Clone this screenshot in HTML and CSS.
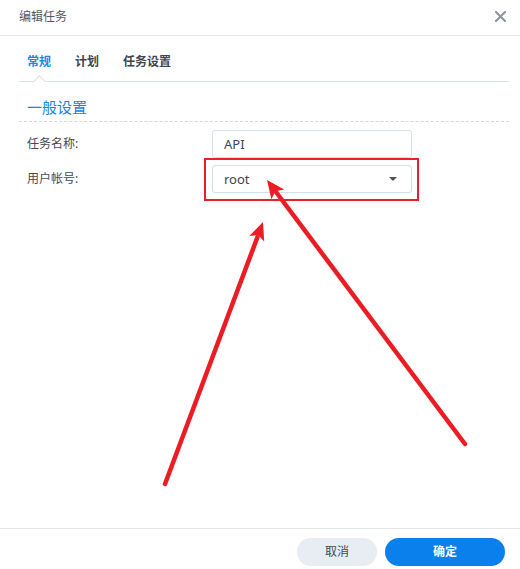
FILE: index.html
```html
<!DOCTYPE html>
<html lang="zh">
<head>
<meta charset="utf-8">
<title>编辑任务</title>
<link rel="stylesheet" href="styles.css">
</head>
<body>
<div class="dialog">
  <div class="header">
    <span class="title">编辑任务</span>
    <span class="close" aria-label="关闭">
      <svg width="11" height="11" viewBox="0 0 11 11"><path d="M1 1L10 10M10 1L1 10" stroke="#8e959c" stroke-width="2.2" stroke-linecap="square"/></svg>
    </span>
  </div>
  <div class="body">
    <div class="tabs">
      <span class="tab active">常规</span>
      <span class="tab">计划</span>
      <span class="tab">任务设置</span>
    </div>
    <div class="section-title">一般设置</div>
    <div class="form">
      <div class="row">
        <label class="label">任务名称:</label>
        <div class="input">API</div>
      </div>
      <div class="row">
        <label class="label">用户帐号:</label>
        <div class="input select highlighted">
          <span>root</span>
          <span class="caret"></span>
        </div>
      </div>
    </div>
  </div>
  <div class="footer">
    <button class="btn cancel">取消</button>
    <button class="btn ok">确定</button>
  </div>
  <svg class="annotations" width="520" height="569" viewBox="0 0 520 569">
    <g stroke="#ec1c24" stroke-width="4.5" stroke-linecap="round" fill="none">
      <line x1="165" y1="484" x2="257.5" y2="237"/>
      <line x1="465" y1="444" x2="276" y2="192"/>
    </g>
    <g fill="#ec1c24">
      <polygon points="263,222 264.2,241.6 258.1,235.1 249.2,236.1"/>
      <polygon points="267,180 284.2,189.6 275.4,191.2 271.4,199.2"/>
    </g>
  </svg>
</div>
</body>
</html>
```
FILE: styles.css
```css
* { box-sizing: border-box; }
html, body { margin: 0; padding: 0; background: #fff; }
body {
  font-family: "Noto Sans", "Noto Sans CJK SC", sans-serif;
  color: #414b55;
}
.dialog {
  position: relative;
  width: 520px;
  height: 569px;
  display: flex;
  flex-direction: column;
  background: #fff;
}
.header {
  height: 36px;
  border-bottom: 1px solid #e3e7eb;
  display: flex;
  align-items: center;
  justify-content: space-between;
  padding: 0 14px 2px 19px;
}
.title {
  font-size: 12px;
  color: #505a64;
  line-height: 16px;
}
.close {
  display: flex;
  width: 12px;
  height: 12px;
  align-items: center;
  justify-content: center;
}
.body {
  flex: 1;
  padding: 0 11px 0 19px;
}
.tabs {
  display: flex;
  gap: 8px;
  padding: 16px 0 9px;
  border-bottom: 1px solid #d8e0e7;
}
.tab {
  position: relative;
  padding: 0 8px;
  font-size: 12px;
  font-weight: 700;
  line-height: 20px;
  color: #3d4650;
}
.tab.active { color: #1a88e6; }
.tab.active::after {
  content: "";
  position: absolute;
  left: 50%;
  bottom: -14px;
  width: 8px;
  height: 8px;
  margin-left: -4px;
  background: #fff;
  border-top: 1px solid #d8e0e7;
  border-left: 1px solid #d8e0e7;
  transform: rotate(45deg);
}
.section-title {
  margin-top: 14px;
  padding: 0 8px 3px;
  font-size: 15px;
  line-height: 22px;
  color: #1685e6;
  border-bottom: 1px dashed #d3d9df;
}
.form {
  display: flex;
  flex-direction: column;
  gap: 7px;
  padding: 8px 0 0 8px;
}
.row {
  display: flex;
  align-items: center;
}
.label {
  width: 185px;
  font-size: 12px;
  color: #414b55;
  line-height: 16px;
}
.input {
  position: relative;
  width: 200px;
  height: 28px;
  border: 1px solid #d6dee6;
  border-radius: 3px;
  padding: 0 11px;
  font-size: 13px;
  line-height: 26px;
  color: #3c4650;
  display: flex;
  align-items: center;
  justify-content: space-between;
}
.caret {
  width: 0;
  height: 0;
  border-left: 4px solid transparent;
  border-right: 4px solid transparent;
  border-top: 4px solid #4a5560;
  margin-right: 3px;
}
.highlighted::after {
  content: "";
  position: absolute;
  left: -9px;
  right: -8px;
  top: -8px;
  bottom: -9px;
  border: 2px solid #e8202a;
}
.footer {
  height: 41px;
  border-top: 1px solid #e1e6ea;
  display: flex;
  justify-content: flex-end;
  align-items: flex-start;
  gap: 8px;
  padding: 9px 15px 0 0;
}
.btn {
  height: 28px;
  border: none;
  border-radius: 14px;
  font-family: "Noto Sans", "Noto Sans CJK SC", sans-serif;
  font-size: 12px;
  line-height: 28px;
  padding: 0;
  cursor: pointer;
}
.cancel {
  width: 80px;
  background: #e8edf3;
  color: #414b55;
}
.ok {
  width: 120px;
  background: #0a80ec;
  color: #fff;
  font-weight: 700;
}
.annotations {
  position: absolute;
  left: 0;
  top: 0;
  pointer-events: none;
}
```
